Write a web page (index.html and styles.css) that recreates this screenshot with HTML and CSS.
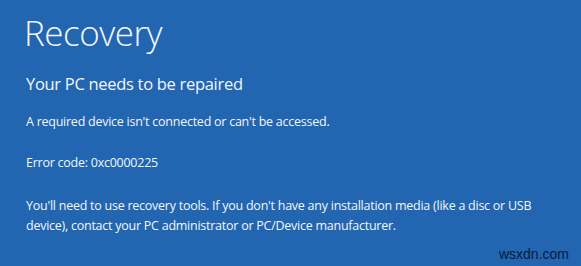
FILE: index.html
```html
<!DOCTYPE html>
<html>
<head>
<meta charset="utf-8">
<link rel="stylesheet" href="styles.css">
</head>
<body>
<main class="screen">
  <h1 class="title">Recovery</h1>
  <h2 class="subtitle">Your PC needs to be repaired</h2>
  <p class="msg msg-first">A required device isn't connected or can't be accessed.</p>
  <p class="msg msg-code">Error code: 0xc0000225</p>
  <p class="msg msg-tools">You'll need to use recovery tools. If you don't have any installation media (like a disc or USB device), contact your PC administrator or PC/Device manufacturer.</p>
  <div class="watermark">wsxdn.com</div>
</main>
</body>
</html>
```

FILE: styles.css
```css
html, body {
  margin: 0;
  padding: 0;
  background: #2265b0;
}
.screen {
  position: relative;
  width: 581px;
  height: 266px;
  box-sizing: border-box;
  padding: 8px 0 0 24px;
  background: #2265b0;
  color: #f2f6fb;
  font-family: "Open Sans", "Noto Sans", sans-serif;
  overflow: hidden;
}
.title {
  margin: 0;
  font-size: 35px;
  font-weight: 300;
  line-height: 50px;
  letter-spacing: -0.5px;
}
.subtitle {
  margin: 14px 0 0 2px;
  font-size: 16.5px;
  font-weight: 400;
  line-height: 24px;
  letter-spacing: -0.3px;
}
.msg {
  margin: 0 0 0 2px;
  font-size: 12.5px;
  line-height: 20px;
  letter-spacing: -0.25px;
}
.msg-first { margin-top: 16px; }
.msg-code { margin-top: 21px; }
.msg-tools { margin-top: 23px; width: 520px; }
.watermark {
  position: absolute;
  right: 12px;
  bottom: 4px;
  font-family: "Liberation Sans", Arial, sans-serif;
  font-size: 14px;
  color: #0b1a38;
}
```
